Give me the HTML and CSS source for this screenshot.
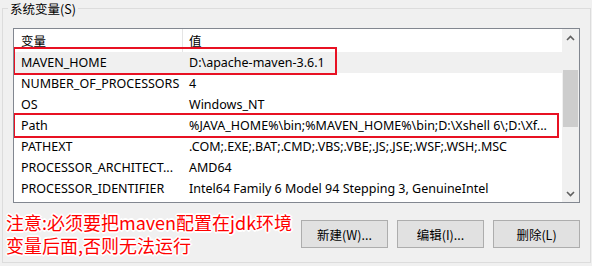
FILE: index.html
```html
<!DOCTYPE html>
<html lang="zh-CN">
<head>
<meta charset="utf-8">
<title>系统变量</title>
<link rel="stylesheet" href="styles.css">
</head>
<body>
<div class="page">
  <div class="group">
    <span class="group-title">系统变量(S)</span>
    <div class="listbox">
      <div class="table">
        <div class="row head"><div class="c1">变量</div><div class="c2">值</div></div>
        <div class="row sel"><div class="c1">MAVEN_HOME</div><div class="c2">D:\apache-maven-3.6.1</div></div>
        <div class="row"><div class="c1">NUMBER_OF_PROCESSORS</div><div class="c2">4</div></div>
        <div class="row"><div class="c1">OS</div><div class="c2">Windows_NT</div></div>
        <div class="row"><div class="c1">Path</div><div class="c2">%JAVA_HOME%\bin;%MAVEN_HOME%\bin;D:\Xshell 6\;D:\Xf...</div></div>
        <div class="row"><div class="c1">PATHEXT</div><div class="c2">.COM;.EXE;.BAT;.CMD;.VBS;.VBE;.JS;.JSE;.WSF;.WSH;.MSC</div></div>
        <div class="row"><div class="c1">PROCESSOR_ARCHITECT...</div><div class="c2">AMD64</div></div>
        <div class="row"><div class="c1">PROCESSOR_IDENTIFIER</div><div class="c2">Intel64 Family 6 Model 94 Stepping 3, GenuineIntel</div></div>
      </div>
      <div class="scrollbar">
        <div class="arrow">
          <svg width="9" height="6" viewBox="0 0 9 6"><path d="M1 5 L4.5 1.5 L8 5" fill="none" stroke="#606060" stroke-width="1.6"/></svg>
        </div>
        <div class="track"><div class="thumb"></div></div>
        <div class="arrow">
          <svg width="9" height="6" viewBox="0 0 9 6"><path d="M1 1 L4.5 4.5 L8 1" fill="none" stroke="#606060" stroke-width="1.6"/></svg>
        </div>
      </div>
      <div class="mark mark1"></div>
      <div class="mark mark2"></div>
    </div>
    <div class="bottom">
      <div class="note">注意:必须要把maven配置在jdk环境<br>变量后面,否则无法运行</div>
      <div class="buttons">
        <button class="btn">新建(W)...</button>
        <button class="btn">编辑(I)...</button>
        <button class="btn">删除(L)</button>
      </div>
    </div>
  </div>
</div>
</body>
</html>
```
FILE: styles.css
```css
html, body {
  margin: 0;
  padding: 0;
  background: #f0f0f0;
}
body {
  width: 592px;
  height: 266px;
  overflow: hidden;
  font-family: "Noto Sans", "Noto Sans CJK SC", sans-serif;
  font-size: 12px;
  color: #000;
}
.page {
  padding: 8px 1px 0 2px;
}
.group {
  position: relative;
  height: 255px;
  border: 1px solid #dcdcdc;
  box-sizing: border-box;
  padding: 19px 10px 0 10px;
}
.group-title {
  position: absolute;
  left: 5px;
  top: -8px;
  padding: 0 2px;
  background: #f0f0f0;
  line-height: 16px;
  font-size: 12.5px;
  font-family: "Noto Sans CJK SC", sans-serif;
  color: #000;
}
.listbox {
  position: relative;
  width: 567px;
  height: 175px;
  box-sizing: border-box;
  border: 1px solid #828790;
  background: #fff;
  display: flex;
  overflow: hidden;
}
.table {
  flex: 1;
  overflow: hidden;
}
.row {
  display: grid;
  grid-template-columns: 169px 1fr;
  height: 21px;
  align-items: center;
  white-space: nowrap;
  font-size: 12.5px;
}
.row.head {
  height: 23px;
  font-family: "Noto Sans CJK SC", sans-serif;
}
.row.head .c1 {
  border-right: 1px solid #e5e5e5;
  height: 23px;
  line-height: 23px;
}
.row.sel {
  background: #f0f0f0;
}
.c1 {
  padding-left: 7px;
  overflow: hidden;
}
.c2 {
  padding-left: 6px;
  overflow: hidden;
}
.scrollbar {
  width: 17px;
  background: #f0f0f0;
  display: flex;
  flex-direction: column;
}
.arrow {
  height: 17px;
  display: flex;
  align-items: center;
  justify-content: center;
}
.track {
  flex: 1;
  padding-top: 24px;
}
.thumb {
  height: 57px;
  margin: 0 1px;
  background: #cdcdcd;
}
.mark {
  position: absolute;
  border: 2px solid #e81123;
  box-sizing: border-box;
}
.mark1 {
  left: -1px;
  top: 18px;
  width: 324px;
  height: 28px;
}
.mark2 {
  left: -1px;
  top: 84px;
  width: 546px;
  height: 25px;
}
.bottom {
  display: flex;
  justify-content: space-between;
  margin-left: -7px;
  margin-top: 8px;
}
.note {
  font-family: "Noto Sans CJK SC", sans-serif;
  font-size: 18px;
  line-height: 23px;
  color: #ff0000;
  text-shadow: 1px 0 #fff, -1px 0 #fff, 0 1px #fff, 0 -1px #fff, 1px 1px #fff, -1px -1px #fff, 1px -1px #fff, -1px 1px #fff, 2px 0 #fff, -2px 0 #fff, 0 2px #fff, 0 -2px #fff;
}
.buttons {
  display: flex;
  gap: 8px;
  padding-top: 9px;
}
.btn {
  width: 87px;
  height: 28px;
  background: #e1e1e1;
  border: 1px solid #adadad;
  font-family: "Noto Sans CJK SC", sans-serif;
  font-size: 12.5px;
  color: #000;
  padding: 0;
  margin: 0;
}
.btn + .btn {
  margin-left: 1px;
}
```
